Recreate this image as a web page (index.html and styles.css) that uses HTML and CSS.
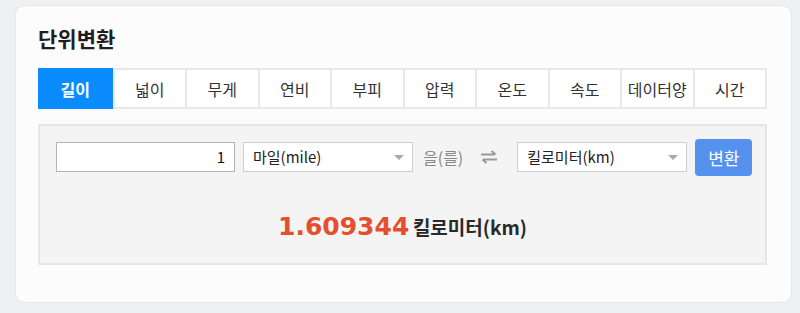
FILE: index.html
```html
<html>
  <head>
    <title>단위변환</title>
    <meta charset="utf-8">
    <link rel="stylesheet" href="styles.css">
  </head>
  <body>
    <div class="card">
      <h2 class="title">단위변환</h2>
      <div class="tabs">
        <div class="tab active">길이</div>
        <div class="tab">넓이</div>
        <div class="tab">무게</div>
        <div class="tab">연비</div>
        <div class="tab">부피</div>
        <div class="tab">압력</div>
        <div class="tab">온도</div>
        <div class="tab">속도</div>
        <div class="tab">데이터양</div>
        <div class="tab">시간</div>
      </div>
      <div class="panel">
        <div class="form-row">
          <div class="num-input">1</div>
          <div class="select">마일(mile)<span class="caret"></span></div>
          <span class="suffix">을(를)</span>
          <svg class="swap" width="18" height="14" viewBox="0 0 18 14">
            <path d="M1 4.5 H15 M11.5 1 L15.5 4.5" stroke="#999" stroke-width="2" fill="none"/>
            <path d="M17 9.5 H3 M6.5 13 L2.5 9.5" stroke="#999" stroke-width="2" fill="none"/>
          </svg>
          <div class="select">킬로미터(km)<span class="caret"></span></div>
          <button class="convert-btn">변환</button>
        </div>
        <div class="result">
          <span class="value">1.609344</span>
          <span class="unit">킬로미터(km)</span>
        </div>
      </div>
    </div>
  </body>
</html>
```
FILE: styles.css
```css
* {
  box-sizing: border-box;
}
body {
  margin: 0;
  padding: 5px 8px 10px 15px;
  background-color: #eef0f3;
  font-family: "Noto Sans CJK KR", "Noto Sans", sans-serif;
  color: #222;
}
.card {
  width: 777px;
  height: 298px;
  background-color: #fcfcfc;
  border: 1px solid #e4e6e9;
  border-radius: 10px;
  padding: 17px 24px 0 22px;
}
.title {
  margin: 0 0 15px 0;
  font-size: 21px;
  font-weight: bold;
  line-height: 30px;
  color: #1e1e1e;
}
.tabs {
  display: grid;
  grid-template-columns: repeat(10, 1fr);
  border: 2px solid #e8e8e8;
  width: 729px;
  height: 41px;
  background-color: #fff;
}
.tab {
  display: flex;
  justify-content: center;
  align-items: center;
  font-size: 16px;
  color: #333;
  border-left: 2px solid #e8e8e8;
  line-height: 1;
}
.tab:first-child {
  border-left: none;
}
.tab.active {
  background-color: #0a8cff;
  color: #fff;
  font-weight: bold;
  margin: -2px 0 -2px -2px;
}
.panel {
  margin-top: 15px;
  width: 729px;
  height: 141px;
  background-color: #f4f4f4;
  border: 2px solid #e6e6e6;
  padding-top: 12px;
}
.form-row {
  display: flex;
  align-items: center;
  height: 38px;
  padding-left: 16px;
}
.num-input {
  width: 179px;
  height: 30px;
  background-color: #fff;
  border: 1px solid #b4b4b4;
  text-align: right;
  padding-right: 9px;
  font-size: 15px;
  line-height: 28px;
  color: #111;
}
.select {
  position: relative;
  width: 170px;
  height: 30px;
  margin-left: 8px;
  background-color: #fff;
  border: 1px solid #cfcfcf;
  padding-left: 9px;
  font-size: 15px;
  line-height: 28px;
  color: #222;
}
.caret {
  position: absolute;
  right: 8px;
  top: 12px;
  border-left: 5px solid transparent;
  border-right: 5px solid transparent;
  border-top: 5px solid #aaa;
}
.suffix {
  margin-left: 10px;
  font-size: 16px;
  color: #888;
}
.swap {
  margin: 0 11px 0 17px;
}
.select + .convert-btn {
  margin-left: 8px;
}
.convert-btn {
  width: 57px;
  height: 37px;
  border: none;
  border-radius: 4px;
  background-color: #5591ef;
  color: #fff;
  font-family: inherit;
  font-size: 17px;
}
.result {
  text-align: center;
  margin-top: 33px;
  line-height: 36px;
}
.value {
  font-size: 25px;
  font-weight: bold;
  color: #e4502e;
  font-family: "DejaVu Sans", sans-serif;
}
.unit {
  font-size: 19px;
  font-weight: bold;
  color: #2a2a2a;
}
```
